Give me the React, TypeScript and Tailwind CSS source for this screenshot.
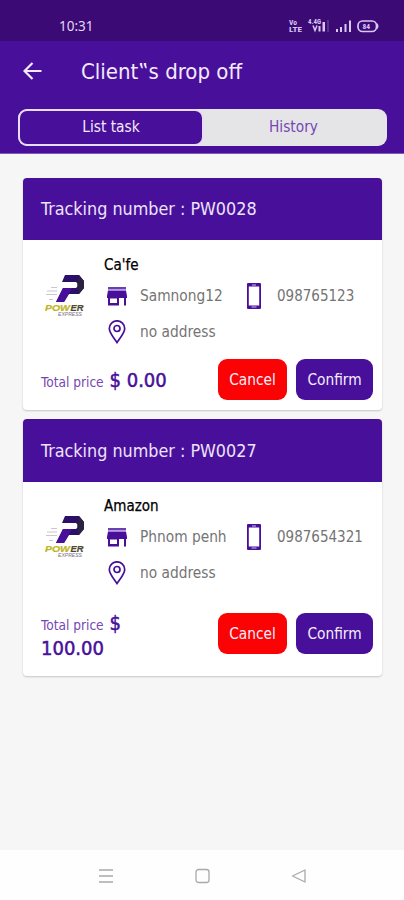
import React from "react";

type Task = {
  number: string;
  name: string;
  place: string;
  phone: string;
  address: string;
  price: string;
};

const tasks: Task[] = [
  { number: "PW0028", name: "Ca'fe", place: "Samnong12", phone: "098765123", address: "no address", price: "0.00" },
  { number: "PW0027", name: "Amazon", place: "Phnom penh", phone: "0987654321", address: "no address", price: "100.00" },
];

function StatusIcons() {
  return (
    <svg width="94" height="18" viewBox="0 0 94 18" fill="#d9c8f2" className="font-['Roboto',sans-serif]">
      <text x="2" y="8" fontSize="7.500" fontWeight="700">Vo</text>
      <text x="2" y="14.500" fontSize="7" fontWeight="700" textLength="13" lengthAdjust="spacingAndGlyphs">LTE</text>
      <text x="21" y="7" fontSize="6.500" fontWeight="700" textLength="13" lengthAdjust="spacingAndGlyphs">4.4G</text>
      <path d="M26 8.500l2 5 2-5" stroke="#d9c8f2" strokeWidth="1.500" fill="none" />
      <path d="M31.500 9h2v5.500h-2zM35.500 5H38v9.500h-2.500z" />
      <path d="M40.500 3h1v12h-1z" opacity=".4" />
      <path d="M49 12h2v3h-2zM53 10h2v5h-2zM57.500 7h2v8h-2zM62 3.500h2V15h-2z" />
      <rect x="71" y="4" width="18.500" height="10.500" rx="4.500" fill="none" stroke="#d9c8f2" strokeWidth="1.700" />
      <path d="M90 6q3 3.200 0 6.500z" />
      <text x="75.500" y="12" fontSize="7.500" fontWeight="700">84</text>
    </svg>
  );
}

function PowerLogo() {
  return (
    <svg width="42" height="44" viewBox="0 0 42 44" className="font-['Liberation_Sans',sans-serif]">
      <path d="M20 0h14l5 6v7l-5 6H24l-5 8h-8l7-14h13l1.500-1.500v-3L31 7H17z" fill="#2c0f68" />
      <path d="M18 13h9l-8 14h-8z" fill="#48109a" />
      <path d="M34 0l5 6v7l-5 6-1.500-7V8z" fill="#2b2140" />
      <path d="M6 12.500h6M2 16h10M1 19.500h11M4 24.500h4" stroke="#c4bfcd" strokeWidth=".9" />
      <g fontSize="9.500" fontWeight="700" fontStyle="italic" strokeWidth=".2">
        <text x="0" y="35.500" fill="#bfb51f" stroke="#bfb51f" textLength="25" lengthAdjust="spacingAndGlyphs">POW</text>
        <text x="25.500" y="35.500" fill="#4f492f" stroke="#4f492f" textLength="13" lengthAdjust="spacingAndGlyphs">ER</text>
      </g>
      <text x="13" y="41" fontSize="6" fontStyle="italic" fill="#77727d" textLength="24" lengthAdjust="spacingAndGlyphs">EXPRESS</text>
    </svg>
  );
}

function StoreIcon() {
  return (
    <svg width="20" height="19" viewBox="0 0 20 19">
      <path d="M1 0h18v2.500H1z" fill="#6c3db5" />
      <path d="M1 3.500h18l1 5.500v2h-1v7.500h-2V11h-5v7.500H1V11H0V9zM3 11.500V16h7v-4.500z" fill="#48109a" fillRule="evenodd" />
    </svg>
  );
}

function PhoneIcon() {
  return (
    <svg width="14" height="26" viewBox="0 0 14 26">
      <path d="M1 0h12q1 0 1 1v24q0 1-1 1H1q-1 0-1-1V1Q0 0 1 0zM1.800 3.500v19h10.400v-19z" fill="#48109a" fillRule="evenodd" />
      <path d="M5 2h4M4.500 24h5" stroke="#cdbbe8" strokeWidth="1" />
    </svg>
  );
}

function PinIcon() {
  return (
    <svg width="18" height="24" viewBox="0 0 18 24" fill="none" stroke="#48109a" strokeWidth="1.700">
      <path d="M9 22.500C5.500 17 1.300 13 1.300 8.500a7.700 7.700 0 0 1 15.400 0C16.700 13 12.500 17 9 22.500z" />
      <circle cx="9" cy="8.500" r="3" />
    </svg>
  );
}

function TaskCard({ task, tall }: { task: Task; tall: boolean }) {
  return (
    <article className={`flex flex-col overflow-hidden rounded-[4px] bg-white shadow-[0_1px_2px_rgba(0,0,0,0.2)] ${tall ? "h-[257px]" : "h-[232px]"}`}>
      <h2 className={`flex shrink-0 items-center bg-[#48109a] pl-[18px] text-[17.800px] text-[#eee3fb] ${tall ? "h-[63px] pt-[1px]" : "h-[62px]"}`}>
        <span className="whitespace-pre">Tracking number : {task.number}</span>
      </h2>
      <div className={`flex h-[109px] shrink-0 ${tall ? "pt-[12px]" : "pt-[13px]"}`}>
        <div className="ml-[22px] mt-[22px] w-[59px] shrink-0"><PowerLogo /></div>
        <div className="flex-1 text-[15px] text-[#747474]">
          <div className="h-[24px] text-[15px] leading-[24px] text-black [-webkit-text-stroke:0.25px_black]">{task.name}</div>
          <div className="flex h-[38px] items-center">
            <div className="w-[36px] pl-[3px]"><StoreIcon /></div>
            <span className="w-[107px] pt-[1px] text-[15.300px]">{task.place}</span>
            <div className="w-[30px]"><PhoneIcon /></div>
            <span className="pt-[1px]">{task.phone}</span>
          </div>
          <div className="flex h-[34px] items-center">
            <div className="w-[36px] pl-[4px]"><PinIcon /></div>
            <span className="pt-[1px] text-[15.300px]">{task.address}</span>
          </div>
        </div>
      </div>
      <div className={`flex pl-[18px] pr-[9px] ${tall ? "h-[70px] pt-[22px]" : "h-[55px] pt-[10px]"}`}>
        <p className={`w-[130px] text-[#48109a] leading-[23px] ${tall ? "-mt-[1px]" : "pt-[10px]"}`}>
          <span className="text-[13.600px] text-[#7547b5]">Total price </span>
          <span className="ml-[2px] text-[20px] [-webkit-text-stroke:0.5px_#48109a]">$ {task.price}</span>
        </p>
        <div className="ml-auto flex h-[41px] gap-[9px] text-[15.300px] text-[#f5edfc]">
          <button className="h-[41px] w-[69px] rounded-[9px] bg-[#fb0304] pt-[2px]">Cancel</button>
          <button className="h-[41px] w-[77px] rounded-[9px] bg-[#48109a] pt-[2px]">Confirm</button>
        </div>
      </div>
    </article>
  );
}

export default function App() {
  return (
    <div className="flex h-[900px] w-[404px] flex-col overflow-hidden bg-[#f6f6f6] font-['DejaVu_Sans_Condensed','DejaVu_Sans','Noto_Sans',sans-serif] [font-stretch:condensed]">
      <div className="flex h-[41px] shrink-0 justify-between bg-[#3b0a75] pl-[59px] pr-[23px] pt-[17px]">
        <span className="font-['Noto_Sans',sans-serif] text-[13.500px] leading-[18px] text-[#e3d6f3] [font-stretch:normal]">10:31</span>
        <StatusIcons />
      </div>
      <header className="h-[113px] shrink-0 border-b border-[#8459bd] bg-[#48109a]">
        <div className="flex h-[60px] items-center pl-[23px]">
          <svg width="19" height="18" viewBox="0 0 19 18" fill="none" stroke="#f4eafc" strokeWidth="2.200">
            <path d="M18.500 9H2M9.500 1L1.500 9l8 8" />
          </svg>
          <h1 className="ml-[39px] text-[22px] text-[#f4eafc]">Client‟s drop off</h1>
        </div>
        <div className="ml-[18px] mt-[8px] flex h-[37px] w-[369px] overflow-hidden rounded-[9px] bg-[#e5e5e7] text-[15.300px]">
          <button className="w-[186px] rounded-[9px] border-2 border-[#e9dcf6] bg-[#48109a] text-[#f4eafc]">List task</button>
          <button className="flex-1 pr-[4px] text-[#7547b5]">History</button>
        </div>
      </header>
      <main className="flex flex-1 flex-col gap-[9px] pl-[23px] pr-[22px] pt-[24px]">
        {tasks.map((task, i) => (
          <TaskCard key={task.number} task={task} tall={i === 1} />
        ))}
      </main>
      <nav className="flex h-[50px] shrink-0 items-center justify-between bg-[#fefefe] pl-[98px] pr-[97px] pt-[1px]">
        <svg width="16" height="16" viewBox="0 0 16 16" stroke="#a9a9a9" strokeWidth="1.300"><path d="M1 2h14M1 8h14M1 14h14" /></svg>
        <svg width="16" height="16" viewBox="0 0 16 16" fill="none" stroke="#a9a9a9" strokeWidth="1.300"><rect x="1" y="1.500" width="13" height="13" rx="2.500" /></svg>
        <svg width="16" height="16" viewBox="0 0 16 16" fill="none" stroke="#a9a9a9" strokeWidth="1.300" strokeLinejoin="round"><path d="M14 2v12L1.500 8z" /></svg>
      </nav>
    </div>
  );
}
